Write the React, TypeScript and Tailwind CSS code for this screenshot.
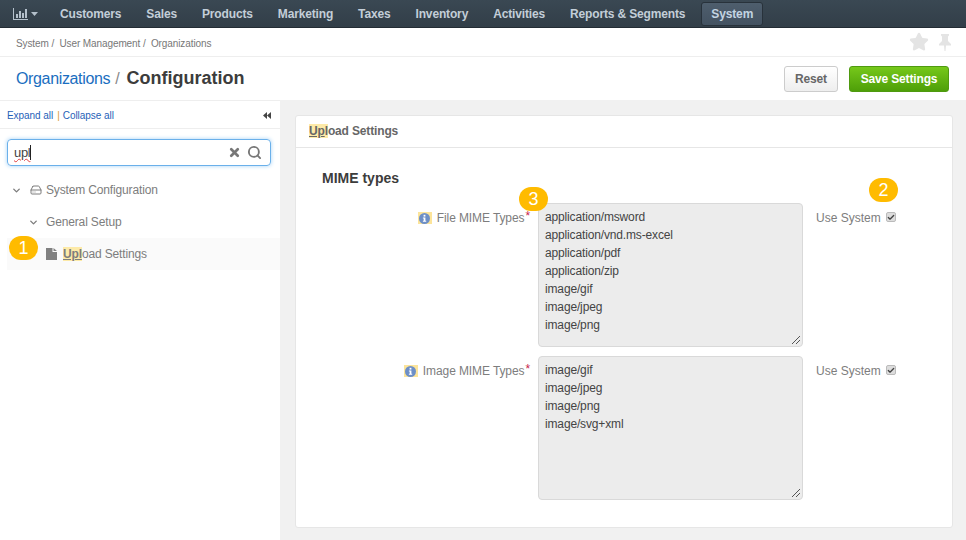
import { Search, Star, X, Check, ChevronDown, HardDrive } from 'lucide-react';

const navItems = ['Customers', 'Sales', 'Products', 'Marketing', 'Taxes', 'Inventory', 'Activities', 'Reports & Segments'];

function Badge({ n, className }: { n: number; className: string }) {
    return (
        <span className={`absolute flex h-6 w-[29px] items-center justify-center rounded-full bg-[#ffbb00] text-[18px] leading-none tracking-normal text-white ${className}`}>
            {n}
        </span>
    );
}

function InfoIcon() {
    return (
        <span className="mr-[5px] flex h-3 w-[14px] items-center justify-center bg-[#fce49a]">
            <svg width="11" height="11" viewBox="0 0 11 11">
                <circle cx="5.5" cy="5.5" r="5.5" fill="#6d8fc7" />
                <rect x="4.6" y="1.8" width="1.8" height="1.8" fill="#fff" />
                <path d="M3.9 4.5h2.5v3.2h.8v1H3.9v-1h.8V5.5h-.8z" fill="#fff" />
            </svg>
        </span>
    );
}

function MimeRow({ label, lines }: { label: string; lines: string[] }) {
    return (
        <div className="flex items-start">
            <div className="flex w-[234px] shrink-0 items-center justify-end pt-[7px] text-xs tracking-[-0.1px] text-[#7d7d7d]">
                <InfoIcon />
                <span>{label}</span>
                <span className="relative -top-[2px] ml-px text-[#c81e4a]">*</span>
            </div>
            <div className="relative ml-2 h-[144px] w-[265px] shrink-0 rounded border border-[#d9d9d9] bg-[#ececec] px-[6px] pt-1 text-xs leading-[18px] text-[#444]">
                {lines.map((l) => (
                    <div key={l}>{l}</div>
                ))}
                <svg width="10" height="10" viewBox="0 0 10 10" className="absolute bottom-[1px] right-[1px]">
                    <path d="M1 9 9 1M5 9 9 5" stroke="#555" strokeWidth="1" fill="none" />
                </svg>
            </div>
            <div className="ml-[13px] flex items-center pt-[7px] text-xs tracking-normal text-[#7d7d7d]">
                <span>Use System</span>
                <span className="relative -top-[1px] ml-[5px] flex h-[10px] w-[10px] items-center justify-center rounded-[2px] border border-[#bbb] bg-[#ddd]">
                    <Check size={9} strokeWidth={4} className="text-[#444]" />
                </span>
            </div>
        </div>
    );
}

export default function App() {
    return (
        <div className="relative flex h-[540px] w-[966px] flex-col overflow-hidden bg-white font-['Liberation_Sans',Arial,sans-serif] tracking-[-0.15px]">
            {/* Top nav */}
            <div className="flex h-[28px] shrink-0 items-center border-b border-[#232c34] bg-gradient-to-b from-[#3a4853] to-[#323e48] text-xs font-bold text-[#c3ced8]">
                <div className="ml-[13px] flex w-[47px] items-center text-[#b4c0cb]">
                    <svg width="15" height="12" viewBox="0 0 15 12" fill="currentColor">
                        <path d="M0 0h1v11h14v1H0z" />
                        <path d="M3 6h2v4H3zM6 3h2v7H6zM9 5h2v5H9zM12 1h2v9h-2z" />
                    </svg>
                    <svg width="7" height="4" viewBox="0 0 7 4" fill="currentColor" className="ml-[3px]">
                        <path d="M0 0h7L3.5 4z" />
                    </svg>
                </div>
                {navItems.map((item) => (
                    <span key={item} className="mr-[25px]">
                        {item}
                    </span>
                ))}
                <span className="-ml-[9px] rounded-[3px] border border-[#28323b] bg-gradient-to-b from-[#4e5e6d] to-[#435261] px-[9px] py-[3px] text-[#c3d4e2]">System</span>
            </div>

            {/* Breadcrumb */}
            <div className="flex h-[29px] shrink-0 items-center justify-between border-b border-[#eeeeee] pl-4 pr-[15px] text-[10px] tracking-[-0.1px] text-[#777]">
                <span className="mt-[2px]">System /&nbsp; User Management /&nbsp; Organizations</span>
                <span className="flex items-center gap-[10px] text-[#e4e4e4]">
                    <Star size={20} fill="currentColor" />
                    <svg width="12" height="17" viewBox="0 0 12 17" fill="currentColor">
                        <path d="M2 0h8v1.5L9 2.500v4.500l3 3v1.500H7l-.5 5.500h-1L5 11.500H0V10l3-3V2.500L2 1.500z" />
                    </svg>
                </span>
            </div>

            {/* Title */}
            <div className="flex h-[43px] shrink-0 items-center justify-between pl-4 pr-[17px]">
                <div className="flex items-center">
                    <span className="text-[16px] tracking-[-0.35px] text-[#1a6ec0]">Organizations</span>
                    <span className="ml-[5px] text-[16px] text-[#888]">/</span>
                    <span className="ml-[7px] text-[18px] font-bold tracking-normal text-[#3c3c3c]">Configuration</span>
                </div>
                <div className="flex items-center gap-[11px]">
                    <span className="flex h-[26px] w-[54px] items-center justify-center rounded-[3px] border border-[#ccc] bg-gradient-to-b from-white to-[#eee] text-xs font-bold text-[#666]">Reset</span>
                    <span className="flex h-[26px] w-[100px] items-center justify-center rounded-[3px] border border-[#4f9a10] bg-gradient-to-b from-[#76c81a] to-[#4e9f08] text-xs font-bold text-white">Save Settings</span>
                </div>
            </div>

            <div className="flex min-h-0 flex-1">
                {/* Sidebar */}
                <aside className="w-[280px] shrink-0 border-t border-[#eeeeee]">
                    <div className="flex h-[28px] items-center justify-between border-b border-[#eeeeee] pl-[7px] pr-[9px] text-[10px] tracking-[-0.05px] text-[#1f5fb8]">
                        <span className="mt-[1px]">
                            Expand all<span className="ml-1 mr-[3px] text-[#d89a3c]">|</span>Collapse all
                        </span>
                        <svg width="8" height="7" viewBox="0 0 8 7" fill="#444" className="mt-[1px]">
                            <path d="M4 0v7L0 3.5zM8 0v7L4 3.5z" />
                        </svg>
                    </div>
                    <div className="mx-[7px] mt-[10px] flex h-[27px] w-[264px] items-center justify-between rounded border border-[#6ab0ea] pl-[6px] pr-[8px] shadow-[0_0_4px_#a5d2f5]">
                        <span className="flex items-center">
                            <span className="text-[13px] tracking-[-0.3px] text-[#444] underline decoration-wavy decoration-[#e04040] decoration-1">upl</span>
                            <span className="h-[15px] w-px bg-[#222]" />
                        </span>
                        <span className="flex items-center gap-[6px] text-[#777]">
                            <X size={13} strokeWidth={5} />
                            <Search size={15} strokeWidth={3} />
                        </span>
                    </div>
                    <div className="mt-2 text-xs text-[#7d7d7d]">
                        <div className="flex h-8 items-center pl-[11px]">
                            <ChevronDown size={11} strokeWidth={3} />
                            <HardDrive size={12} className="ml-2" />
                            <span className="ml-[4px]">System Configuration</span>
                        </div>
                        <div className="flex h-8 items-center pl-[28px]">
                            <ChevronDown size={11} strokeWidth={3} />
                            <span className="ml-[7px]">General Setup</span>
                        </div>
                        <div className="ml-[7px] flex h-8 items-center bg-[#fafafa] pl-[39px]">
                            <svg width="11" height="12" viewBox="0 0 11 12" fill="#808080">
                                <path d="M0 0h6.5v4H11v8H0zM7.500 0 11 3H7.500z" />
                            </svg>
                            <span className="ml-[6px]">
                                <span className="bg-[#fdeaa8] font-bold underline">Upl</span>oad Settings
                            </span>
                        </div>
                    </div>
                </aside>

                {/* Content */}
                <main className="min-w-0 flex-1 bg-[#f1f1f1] pl-[15px] pr-[13px] pt-[15px]">
                    <div className="h-[413px] rounded-[3px] border border-[#e6e6e6] bg-white">
                        <div className="flex h-[32px] items-center border-b border-[#e6e6e6] pb-[2px] pl-[13px] text-xs font-bold text-[#666]">
                            <span>
                                <span className="bg-[#fdeaa8] underline">Up</span>
                                <span className="bg-[#fdeaa8]">l</span>oad Settings
                            </span>
                        </div>
                        <div className="pl-[26px] pt-[20px] text-sm font-bold tracking-normal text-[#3c3c3c]">MIME types</div>
                        <div className="mt-[15px] flex flex-col gap-[9px]">
                            <MimeRow
                                label="File MIME Types"
                                lines={['application/msword', 'application/vnd.ms-excel', 'application/pdf', 'application/zip', 'image/gif', 'image/jpeg', 'image/png']}
                            />
                            <MimeRow label="Image MIME Types" lines={['image/gif', 'image/jpeg', 'image/png', 'image/svg+xml']} />
                        </div>
                    </div>
                </main>
            </div>

            <Badge n={1} className="left-[9px] top-[236px]" />
            <Badge n={2} className="left-[869px] top-[178px]" />
            <Badge n={3} className="left-[519px] top-[187px]" />
        </div>
    );
}
